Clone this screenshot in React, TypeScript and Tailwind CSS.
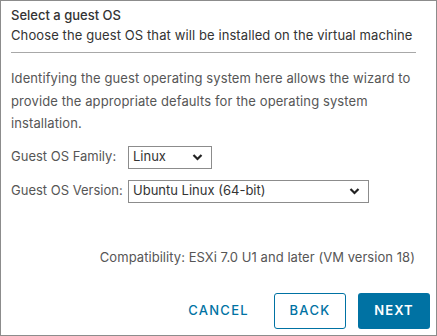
import React from "react";

function Chevron() {
  return (
    <svg width="11" height="8" viewBox="0 0 11 8" className="absolute right-[8px] top-1/2 -translate-y-1/2">
      <path d="M1.5 2 L5.5 6 L9.5 2" fill="none" stroke="#222" strokeWidth="2.2" />
    </svg>
  );
}

export default function App() {
  return (
    <div
      className="w-[437px] h-[336px] border border-[#8c8c8c] bg-white flex flex-col text-[#565656]"
      style={{ fontFamily: "Inter, 'Open Sans', sans-serif" }}
    >
      <div className="px-[10px] pt-[5px]">
        <div className="text-[13px] leading-[19px] text-[#333] font-medium">Select a guest OS</div>
        <div className="text-[13px] leading-[19px] mt-[1px] text-[#333] pb-[7px] border-b border-[#a8a8a8] mr-[10px] tracking-[0.1px]">
          Choose the guest OS that will be installed on the virtual machine
        </div>
        <p className="text-[13px] leading-[22.5px] mt-[14px] pr-[10px] tracking-[0.1px]">
          Identifying the guest operating system here allows the wizard to provide the appropriate defaults for the operating system installation.
        </p>
        <div className="mt-[11px] flex items-center">
          <span className="w-[117px] text-[13px]">Guest OS Family:</span>
          <div className="relative w-[84px] h-[23px] border border-[#8c8c8c] text-[13px] text-[#333] pl-[4px] flex items-center">
            Linux
            <Chevron />
          </div>
        </div>
        <div className="mt-[11px] flex items-center">
          <span className="w-[117px] text-[13px]">Guest OS Version:</span>
          <div className="relative w-[241px] h-[23px] border border-[#8c8c8c] text-[13px] text-[#333] pl-[4px] flex items-center">
            Ubuntu Linux (64-bit)
            <Chevron />
          </div>
        </div>
      </div>
      <div className="mt-auto px-[21px] text-right text-[13px] mb-[26px] tracking-[0.05px]">
        Compatibility: ESXi 7.0 U1 and later (VM version 18)
      </div>
      <div className="flex justify-end items-center gap-[12px] pr-[6px] pb-[6px]">
        <button className="h-[36px] px-[13px] text-[13px] font-medium tracking-[0.1em] text-[#0072a3]">CANCEL</button>
        <button className="h-[36px] w-[72px] rounded-[3px] border border-[#0072a3] text-[13px] font-medium tracking-[0.1em] text-[#0072a3]">BACK</button>
        <button className="h-[36px] w-[72px] rounded-[3px] bg-[#0072a3] text-[13px] font-semibold tracking-[0.08em] text-white">NEXT</button>
      </div>
    </div>
  );
}
